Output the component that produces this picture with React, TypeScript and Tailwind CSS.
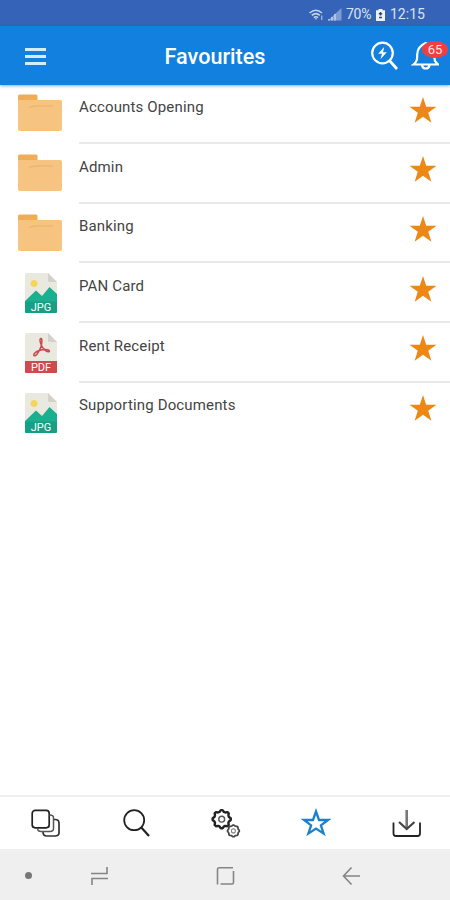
type FileKind = "folder" | "jpg" | "pdf";

interface IFavourite {
  name: string;
  kind: FileKind;
}

const favourites: IFavourite[] = [
  { name: "Accounts Opening", kind: "folder" },
  { name: "Admin", kind: "folder" },
  { name: "Banking", kind: "folder" },
  { name: "PAN Card", kind: "jpg" },
  { name: "Rent Receipt", kind: "pdf" },
  { name: "Supporting Documents", kind: "jpg" },
];

const STAR = "M14 0 L17.2 9.8 H27.5 L19.2 15.8 L22.4 25.8 L14 19.7 L5.6 25.8 L8.8 15.8 L0.5 9.8 H10.8 Z";

const FolderIcon = () => (
  <svg className="h-[38px] w-11" viewBox="0 0 44 38">
    <path d="M0 2 Q0 .5 1.5 .5 H18 Q19.5 .5 19.5 2 V12 H0 Z" fill="#f0ad57" />
    <path d="M0 6 H42 Q44 6 44 8 V35 Q44 37 42 37 H2 Q0 37 0 35 Z" fill="#f6c480" />
    <path d="M11 13 Q22 11.2 35 12.2" stroke="#edb56f" strokeWidth="1.3" fill="none" />
  </svg>
);

const Sheet = ({ label, color }: { label: string; color: string }) => (
  <>
    <path d="M0 1.5 Q0 0 1.5 0 H23 L32 9 V39 Q32 40 31 40 H1 Q0 40 0 39 Z" fill="#e9e9e0" />
    <path d="M23 0 L32 9 H24.5 Q23 9 23 7.5 Z" fill="#d3d1c9" />
    <path d="M0 28 H32 V39 Q32 40 31 40 H1 Q0 40 0 39 Z" fill={color} />
    <text x="16" y="38" textAnchor="middle" fontSize="11" fill="#fff" fontFamily="Roboto, sans-serif">
      {label}
    </text>
  </>
);

const JpgIcon = () => (
  <svg className="ml-px h-10 w-8" viewBox="0 0 32 40">
    <Sheet label="JPG" color="#15a085" />
    <circle cx="9" cy="10.5" r="3.4" fill="#f3d55b" />
    <path d="M0 28.5 V28 L11 17.5 L17 23 L24.5 14 L32 21 V28.5 Z" fill="#1ab08f" />
  </svg>
);

const PdfIcon = () => (
  <svg className="ml-px h-10 w-8" viewBox="0 0 32 40">
    <Sheet label="PDF" color="#cc4b4c" />
    <path
      d="M16 5.5 C14.3 5.5 15 9.5 16.5 12.5 C18.5 16.5 22 19.5 24.3 18.6 C25.2 16.8 20.5 16 16 17 C11.5 18 8 20.6 9 22.6 C10.8 24 14.6 18 16 13.5 C17 10 17.4 5.5 16 5.5 Z"
      fill="none"
      stroke="#c94b4c"
      strokeWidth="1.5"
    />
  </svg>
);

const fileIcons = { folder: FolderIcon, jpg: JpgIcon, pdf: PdfIcon };

const StatusBar = () => (
  <div className="flex h-[26px] items-center justify-end bg-[#3563b8] pr-[25px] pt-[3px] text-[14px] text-[#d9e3f5]">
    <svg className="mr-1 h-3 w-[15px]" viewBox="0 0 15 12" fill="none" stroke="#c3d2ee" strokeWidth="1.5">
      <path d="M.5 4 Q7 -1.5 13 4 M2.8 6.4 Q7 2.8 10.8 6.4 M4.8 8.6 Q7 6.8 9 8.6" />
      <path d="M5.8 9.3 L7 11 L8.2 9.3 Z" fill="#c3d2ee" stroke="none" />
      <path d="M12.8 6.5 V11" strokeWidth="1" />
    </svg>
    <svg className="mr-[4px] h-[13px] w-[14px]" viewBox="0 0 14 13">
      <path d="M0 12.5 L13.5 0 V12.5 Z" fill="#7f9dd4" />
      <path d="M1 12.5 V11 M4 12.5 V9 M7 12.5 V6" stroke="#b5c8ea" strokeWidth="1.8" />
    </svg>
    <span className="w-[26px] whitespace-nowrap tracking-[-0.3px]">70%</span>
    <svg className="ml-1 mr-[5px] h-3 w-[9px]" viewBox="0 0 9 12">
      <path d="M2.5 0 H6.5 V1.2 H9 V12 H0 V1.2 H2.5 Z" fill="#eef2fa" />
      <path d="M4.5 3 V6.5 M2.8 4.8 H6.2 M3 8.5 H6" stroke="#30466f" strokeWidth="1.5" />
    </svg>
    <span className="w-[35px] whitespace-nowrap">12:15</span>
  </div>
);

const Header = () => (
  <header className="relative z-10 flex h-[59px] items-center bg-[#1280de] text-white shadow-[0_1px_3px_rgba(18,90,160,0.5)]">
    <div className="flex w-[100px] flex-col gap-1 pl-[25px] pt-px">
      <span className="h-[3px] w-[21px] bg-[#d5ecfb]" />
      <span className="h-[3px] w-[21px] bg-[#d5ecfb]" />
      <span className="h-[3px] w-[21px] bg-[#d5ecfb]" />
    </div>
    <h1 className="flex-1 pr-[40px] pt-[3px] text-center text-[21.6px] font-medium">Favourites</h1>
    <div className="flex w-[80px] gap-3 pt-px">
      <svg className="h-[30px] w-[29px] shrink-0" viewBox="0 0 29 30" fill="none" stroke="#fff" strokeWidth="2.2">
        <circle cx="12.5" cy="12" r="10.3" />
        <path d="M19.8 19.8 L27 28" strokeWidth="2.8" />
        <path d="M14.2 6 L8.2 12.7 H12 L10.4 18.2 L16.8 11.2 H13 Z" fill="#fff" stroke="none" />
      </svg>
      <div className="relative">
        <svg className="h-[30px] w-7" viewBox="0 0 28 30" fill="none" stroke="#fff" strokeWidth="2.2">
          <path d="M2.5 23.5 H27 C23 20.5 23.5 18.5 23.5 13.5 C23.5 7 20 4.2 14.7 2 C9.5 4.2 6.2 7.5 6.2 13.5 C6.2 18.5 6.2 20.5 2.5 23.5 Z" />
          <path d="M11 24 Q11.5 27.5 14.7 27.5 Q18 27.5 18.5 24" />
        </svg>
        <span className="absolute left-[11px] top-0 flex h-[17px] w-[26px] items-center justify-center rounded-[50%] bg-[#f03f40] text-[13px] leading-none text-[#ffe3e3]">
          65
        </span>
      </div>
    </div>
  </header>
);

const FavouriteRow = ({ item, last }: { item: IFavourite; last: boolean }) => {
  const Icon = fileIcons[item.kind];

  return (
    <li className="flex h-[59.7px]">
      <div className="flex w-[80px] shrink-0 justify-center pt-[10px]">
        <Icon />
      </div>
      <div className={`-ml-px flex flex-1 justify-between border-b-2 ${last ? "border-transparent" : "border-[#e9e9ea]"}`}>
        <span className="pt-[12.8px] text-[15px] leading-5 tracking-[0.15px] text-[#444]">{item.name}</span>
        <svg className="mr-[13px] mt-[12.5px] h-[26px] w-7" viewBox="0 0 28 26">
          <path d={STAR} fill="#ec8813" />
        </svg>
      </div>
    </li>
  );
};

const gearPath = (cx: number, cy: number, r: number, depth: number) => {
  const points: string[] = [];
  for (let i = 0; i < 32; i++) {
    const radius = i % 4 < 2 ? r : r - depth;
    const angle = ((i - 0.5) / 32) * Math.PI * 2;
    points.push(`${(cx + radius * Math.cos(angle)).toFixed(2)} ${(cy + radius * Math.sin(angle)).toFixed(2)}`);
  }
  return `M${points.join("L")}Z`;
};

const tabs = [
  {
    id: "files",
    icon: (
      <g stroke="#222" strokeWidth="1.7">
        <rect x="3.2" y="3.4" width="17" height="17.4" rx="3" />
        <path d="M20.5 8 H21 Q24.5 8 24.5 11 V21.5 Q24.5 24.5 21 24.5 H12 Q8.5 24.5 8.5 21" stroke="#555" strokeWidth="1.5" />
        <path d="M25 12.5 H26 Q30 12.5 30 16 V25.5 Q30 29 26 29 H18 Q14 29 14 25" stroke="#333" />
      </g>
    ),
  },
  {
    id: "search",
    icon: (
      <g stroke="#222" strokeWidth="1.8">
        <circle cx="15.2" cy="13.2" r="10" />
        <path d="M22.3 20.6 L30 29" strokeWidth="2.2" />
      </g>
    ),
  },
  {
    id: "settings",
    icon: (
      <g stroke="#222">
        <path d={gearPath(12.7, 12.2, 9.1, 1.5)} strokeWidth="2.4" strokeLinejoin="round" />
        <circle cx="12.7" cy="12.2" r="2.9" stroke="#555" strokeWidth="1.4" />
        <path d={gearPath(24.4, 23.9, 5.9, 0.7)} stroke="#444" strokeWidth="1.7" strokeLinejoin="round" />
        <circle cx="24.4" cy="23.9" r="2" stroke="#888" strokeWidth="1.1" />
      </g>
    ),
  },
  {
    id: "favourites",
    icon: (
      <path
        d="M17 4.5 L20 13 H29 L21.9 18.4 L24.6 26.6 L17 21.6 L9.4 26.6 L12.1 18.4 L5 13 H14 Z"
        stroke="#1d7fd0"
        strokeWidth="2.3"
      />
    ),
  },
  {
    id: "downloads",
    icon: (
      <g>
        <path d="M4.5 15.5 V26.5 Q4.5 29 7 29 H28.5 Q31 29 31 26.5 V15.5" stroke="#222" strokeWidth="1.8" />
        <path d="M17.7 3 V21" stroke="#777" strokeWidth="2.6" />
        <path d="M10 15 L17.7 22 L25.5 15" stroke="#444" strokeWidth="2.2" />
      </g>
    ),
  },
];

const TabBar = () => (
  <nav className="flex h-[54px] border-t-2 border-[#eeeeef] bg-white">
    {tabs.map((tab) => (
      <div key={tab.id} className="flex flex-1 items-center justify-center">
        <svg className="h-8 w-8" viewBox="0 0 32 32" fill="none">
          {tab.icon}
        </svg>
      </div>
    ))}
  </nav>
);

const SystemBar = () => (
  <div className="flex h-[51px] items-center bg-[#efefef] pl-[25px] pt-0.5">
    <span className="mr-[57px] size-[7px] rounded-full bg-[#777]" />
    <svg className="mr-[106px] size-5" viewBox="0 0 20 20" fill="none" stroke="#858585" strokeWidth="1.6">
      <path d="M2 7.5 H18 V1 M19 12.5 H3 V19" />
    </svg>
    <svg className="mr-[106px] size-5" viewBox="0 0 20 20" fill="none" stroke="#858585" strokeWidth="1.6">
      <path d="M2.5 18.5 V3.5 Q2.5 1.8 4.2 1.8 H18 M18.5 5 V16.5 Q18.5 18 17 18 H5.5" />
    </svg>
    <svg className="size-5" viewBox="0 0 20 20" fill="none" stroke="#858585" strokeWidth="1.6">
      <path d="M10.5 1.5 L2.5 10 L10.5 18.5 M2.5 10 H19" />
    </svg>
  </div>
);

const App = () => (
  <div className="flex h-[900px] w-[450px] flex-col overflow-hidden bg-white font-[Roboto,sans-serif]">
    <StatusBar />
    <Header />
    <ul className="-mt-[0.8px] flex-1">
      {favourites.map((item, index) => (
        <FavouriteRow key={item.name} item={item} last={index === favourites.length - 1} />
      ))}
    </ul>
    <TabBar />
    <SystemBar />
  </div>
);

export default App;
